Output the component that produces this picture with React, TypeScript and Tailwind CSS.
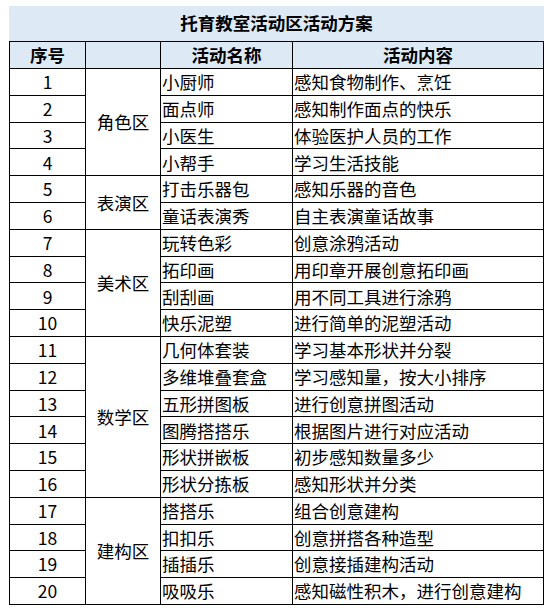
import React from 'react';

type Group = { zone: string; items: [string, string][] };

const groups: Group[] = [
  {
    zone: '角色区',
    items: [
      ['小厨师', '感知食物制作、烹饪'],
      ['面点师', '感知制作面点的快乐'],
      ['小医生', '体验医护人员的工作'],
      ['小帮手', '学习生活技能'],
    ],
  },
  {
    zone: '表演区',
    items: [
      ['打击乐器包', '感知乐器的音色'],
      ['童话表演秀', '自主表演童话故事'],
    ],
  },
  {
    zone: '美术区',
    items: [
      ['玩转色彩', '创意涂鸦活动'],
      ['拓印画', '用印章开展创意拓印画'],
      ['刮刮画', '用不同工具进行涂鸦'],
      ['快乐泥塑', '进行简单的泥塑活动'],
    ],
  },
  {
    zone: '数学区',
    items: [
      ['几何体套装', '学习基本形状并分裂'],
      ['多维堆叠套盒', '学习感知量，按大小排序'],
      ['五形拼图板', '进行创意拼图活动'],
      ['图腾搭搭乐', '根据图片进行对应活动'],
      ['形状拼嵌板', '初步感知数量多少'],
      ['形状分拣板', '感知形状并分类'],
    ],
  },
  {
    zone: '建构区',
    items: [
      ['搭搭乐', '组合创意建构'],
      ['扣扣乐', '创意拼搭各种造型'],
      ['插插乐', '创意接插建构活动'],
      ['吸吸乐', '感知磁性积木，进行创意建构'],
    ],
  },
];

const cell = 'border border-black p-0 leading-none';

export default function App() {
  let n = 0;
  return (
    <div
      className="w-[548px] h-[611px] bg-white pt-[6px] pl-[9px] text-black"
      style={{ fontFamily: '"Noto Sans CJK SC", "Noto Sans", sans-serif' }}
    >
      <div className="w-[535px] h-[35px] bg-[#dde9f5] flex items-center justify-center text-[17.5px] font-bold">
        托育教室活动区活动方案
      </div>
      <table className="w-[534px] table-fixed border-collapse text-[17.5px]">
        <colgroup>
          <col className="w-[76px]" />
          <col className="w-[75px]" />
          <col className="w-[132px]" />
          <col className="w-[251px]" />
        </colgroup>
        <thead>
          <tr className="h-[27px] bg-[#dde9f5] font-bold">
            <th className={`${cell} text-center`}>序号</th>
            <th className={cell}></th>
            <th className={`${cell} text-center`}>活动名称</th>
            <th className={`${cell} text-center`}>活动内容</th>
          </tr>
        </thead>
        <tbody>
          {groups.map((g) =>
            g.items.map(([name, content], i) => {
              n += 1;
              return (
                <tr key={n} className="h-[26.8px]">
                  <td className={`${cell} text-center`}>{n}</td>
                  {i === 0 && (
                    <td rowSpan={g.items.length} className={`${cell} text-center align-middle`}>
                      {g.zone}
                    </td>
                  )}
                  <td className={`${cell} pl-px whitespace-nowrap`}>{name}</td>
                  <td className={`${cell} pl-px whitespace-nowrap`}>{content}</td>
                </tr>
              );
            })
          )}
        </tbody>
      </table>
    </div>
  );
}
